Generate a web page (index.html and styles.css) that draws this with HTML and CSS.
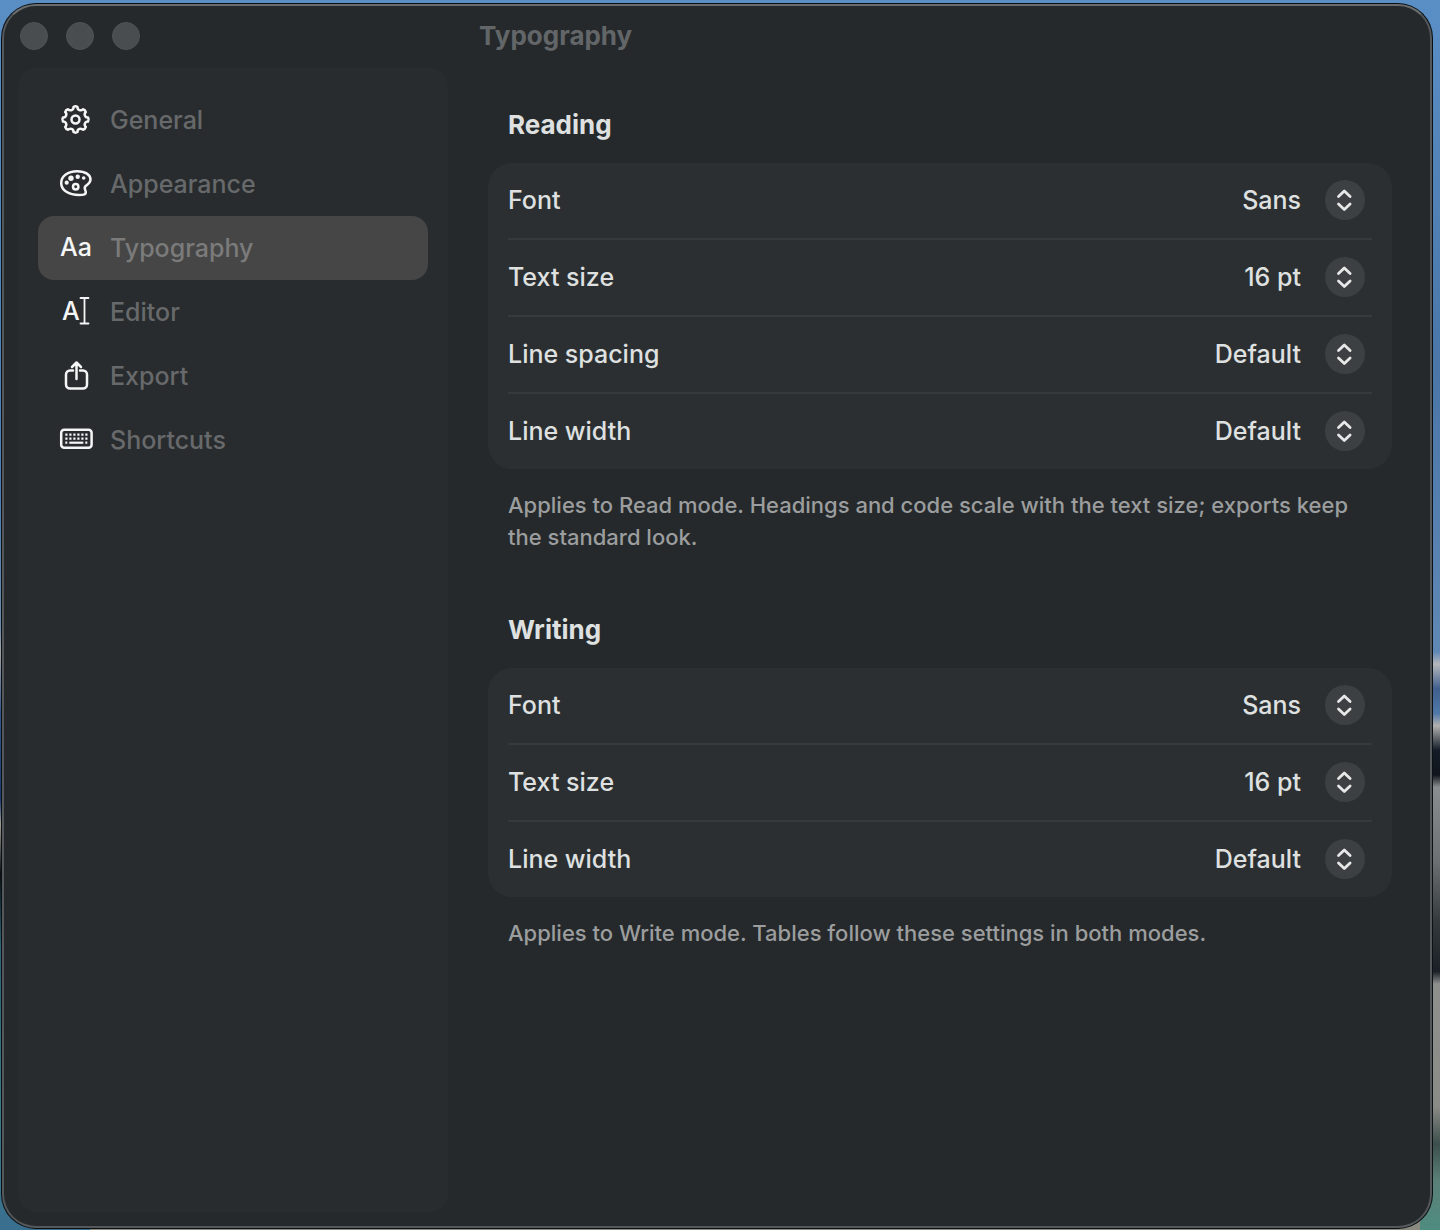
FILE: index.html
```html
<!DOCTYPE html>
<html lang="en">
<head>
  <meta charset="UTF-8">
  <title>Typography</title>
  <link rel="stylesheet" href="styles.css">
</head>
<body>

<!-- shared chevron icon for the pop-up buttons -->
<svg class="sprite" width="0" height="0" aria-hidden="true">
  <symbol id="chevrons" viewBox="-20 -20 40 40">
    <path d="M-6.5 -3.5L-.7 -9L5.1 -3.5M-6.5 4L-.7 9.5L5.1 4"/>
  </symbol>
</svg>

<div class="window">
  <header class="titlebar">
    <div class="lights">
      <button class="light" aria-label="Close"></button>
      <button class="light" aria-label="Minimize"></button>
      <button class="light" aria-label="Zoom"></button>
    </div>
    <h1>Typography</h1>
  </header>

  <nav class="sidebar">
    <a class="item" href="#general">
      <svg class="icon" viewBox="-16.5 -16.5 34 34">
        <path d="M2.03 -12.54C1.6 -9.6 5.5 -8 7.44 -10.32Q9.7 -9.7 10.32 -7.44C8 -5.5 9.6 -1.6 12.54 -2.03Q13.8 0 12.54 2.03C9.6 1.6 8 5.5 10.32 7.44Q9.7 9.7 7.44 10.32C5.5 8 1.6 9.6 2.03 12.54Q0 13.8 -2.03 12.54C-1.6 9.6 -5.5 8 -7.44 10.32Q-9.7 9.7 -10.32 7.44C-8 5.5 -9.6 1.6 -12.54 2.03Q-13.8 0 -12.54 -2.03C-9.6 -1.6 -8 -5.5 -10.32 -7.44Q-9.7 -9.7 -7.44 -10.32C-5.5 -8 -1.6 -9.6 -2.03 -12.54Q0 -13.8 2.03 -12.54Z"/>
        <circle r="4"/>
      </svg>
      <span>General</span>
    </a>
    <a class="item" href="#appearance">
      <svg class="icon" viewBox="-17 -17 34 34">
        <path d="M1 -12.8C9.5 -12.8 14.5 -9 14.5 -4.5C14.5 -1 11.5 .5 9.5 2.2C7.5 4.2 9.6 6 9.8 8C10 11 6.5 11 3 11C-7 11 -14.8 6.5 -14.8 -1C-14.8 -8 -8 -12.8 1 -12.8Z"/>
        <circle cx="-.3" cy="2.7" r="2.7"/>
        <g class="solid">
          <circle cx="-9.3" cy="-1.3" r="2.1"/>
          <circle cx="-5" cy="-5.8" r="2.7"/>
          <circle cx="1.7" cy="-7.3" r="2.2"/>
          <circle cx="7.7" cy="-6" r="1.8"/>
        </g>
      </svg>
      <span>Appearance</span>
    </a>
    <a class="item active" href="#typography">
      <svg class="icon" viewBox="-17 -17 34 34">
        <text class="glyph" x="0" y="8" text-anchor="middle">Aa</text>
      </svg>
      <span>Typography</span>
    </a>
    <a class="item" href="#editor">
      <svg class="icon" viewBox="-17 -17 34 34">
        <text class="glyph" x="-14" y="8">A</text>
        <path class="thin" d="M4.5 -14H12.5M4.5 11.5H12.5M8.5 -14V11.5"/>
      </svg>
      <span>Editor</span>
    </a>
    <a class="item" href="#export">
      <svg class="icon" viewBox="-17 -17 34 34">
        <path d="M-3 -5.5H-6A4 4 0 0 0 -10 -1.5V8.5A4 4 0 0 0 -6 12.5H7A4 4 0 0 0 11 8.5V-1.5A4 4 0 0 0 7 -5.5H4M.5 3V-13.2M-4 -9L.5 -13.5L5 -9"/>
      </svg>
      <span>Export</span>
    </a>
    <a class="item" href="#shortcuts">
      <svg class="icon" viewBox="-17 -17 34 34">
        <rect x="-14.8" y="-10.2" width="30.4" height="18" rx="3"/>
        <path class="keys" d="M-10.7 -5.3H12M-10.7 -1.3H12M-10.7 2.7H-8.7M9.3 2.7H11.3"/>
        <path class="keybar" d="M-6.7 2.7H7.3"/>
      </svg>
      <span>Shortcuts</span>
    </a>
  </nav>

  <main>
    <section>
      <h2>Reading</h2>
      <div class="card">
        <div class="row">
          <label for="read-font">Font</label>
          <div class="picker">
            <select id="read-font"><option>Sans</option><option>Serif</option><option>Mono</option></select>
            <svg><use href="#chevrons"/></svg>
          </div>
        </div>
        <div class="row">
          <label for="read-size">Text size</label>
          <div class="picker">
            <select id="read-size"><option>16 pt</option><option>18 pt</option></select>
            <svg><use href="#chevrons"/></svg>
          </div>
        </div>
        <div class="row">
          <label for="read-spacing">Line spacing</label>
          <div class="picker">
            <select id="read-spacing"><option>Default</option><option>Relaxed</option></select>
            <svg><use href="#chevrons"/></svg>
          </div>
        </div>
        <div class="row">
          <label for="read-width">Line width</label>
          <div class="picker">
            <select id="read-width"><option>Default</option><option>Wide</option></select>
            <svg><use href="#chevrons"/></svg>
          </div>
        </div>
      </div>
      <p class="note">Applies to Read mode. Headings and code scale with the text size; exports keep the standard look.</p>
    </section>

    <section>
      <h2>Writing</h2>
      <div class="card">
        <div class="row">
          <label for="write-font">Font</label>
          <div class="picker">
            <select id="write-font"><option>Sans</option><option>Serif</option><option>Mono</option></select>
            <svg><use href="#chevrons"/></svg>
          </div>
        </div>
        <div class="row">
          <label for="write-size">Text size</label>
          <div class="picker">
            <select id="write-size"><option>16 pt</option><option>18 pt</option></select>
            <svg><use href="#chevrons"/></svg>
          </div>
        </div>
        <div class="row">
          <label for="write-width">Line width</label>
          <div class="picker">
            <select id="write-width"><option>Default</option><option>Wide</option></select>
            <svg><use href="#chevrons"/></svg>
          </div>
        </div>
      </div>
      <p class="note">Applies to Write mode. Tables follow these settings in both modes.</p>
    </section>
  </main>
</div>

</body>
</html>
```
FILE: styles.css
```css
:root {
  --window-bg: #25292b;
  --sidebar-bg: #282c2e;
  --card-bg: #2b2f31;
  --line: #363a3c;
  --text: #dfe0e0;
  --muted: #67696b;
}

* {
  box-sizing: border-box;
}

/* desktop behind the window: sky on top, mountains and lake lower down */
body {
  margin: 0;
  min-height: 100vh;
  display: flex;
  padding: 4px 8px 2px 2px;
  font-family: Inter, "Liberation Sans", sans-serif;
  font-size: 25px;
  font-weight: 500;
  line-height: 32px;
  color: var(--text);
  background:
    linear-gradient(#5a8fc6 0, #4a76a8 30%, #6088b5 53%, #b5b8bb 54%, #405f8e 56%, #5079a8 58%, #b0b0ae 59%, #141c28 61%, #10151c 63%, #8b8e8f 64%, #6c7071 70%, #34393c 75%, #1a2026 79%, #8f908e 80%, #8a8a86 90%, #3c4f4c 93%, #5a8078 96%, #4f8c80 100%) right / 20px 100% no-repeat,
    linear-gradient(#5a8fc6 0, #4d7fb3 40%, #6c8caa 51%, #a5a5a3 53%, #34568c 58%, #1c3c70 65%, #a09c92 67%, #0c1014 71%, #2f6678 77%, #3a7a86 90%, #3a6f8f 100%) left / 90px 100% no-repeat,
    linear-gradient(#5a8fc6 50%, #8b8a80 50%);
}

.sprite {
  display: none;
}

.window {
  flex: 1;
  display: grid;
  grid-template-columns: 444px 1fr;
  grid-template-rows: 62px 1fr;
  border: 2px solid #54585a;
  border-top-color: #6a6d6e;
  border-radius: 34px;
  background: var(--window-bg);
  box-shadow: 0 0 0 1px #0b1015;
}

/* title bar */
.titlebar {
  grid-column: 1 / -1;
  display: grid;
  grid-template-columns: subgrid;
  align-items: center;
  padding-bottom: 2px;
}

.lights {
  display: flex;
  gap: 18px;
  padding-left: 16px;
}

.light {
  width: 28px;
  height: 28px;
  padding: 0;
  border: 1px solid #505355;
  border-radius: 50%;
  background: #4a4d4f;
}

h1 {
  margin: 0;
  padding-left: 31px;
  font-size: 26px;
  font-weight: 700;
  color: #636668;
}

/* sidebar */
.sidebar {
  margin: 0 0 14px 14px;
  padding: 20px;
  border-radius: 18px;
  background: var(--sidebar-bg);
}

.item {
  display: flex;
  align-items: center;
  gap: 17px;
  height: 64px;
  padding-left: 21px;
  border-radius: 16px;
  color: var(--muted);
  text-decoration: none;
}

.item.active {
  background: #464646;
  color: #7b7b7b;
}

.icon {
  width: 34px;
  height: 34px;
  fill: none;
  stroke: #f4f5f5;
  stroke-width: 2.5;
  stroke-linecap: round;
  stroke-linejoin: round;
}

.icon .solid {
  fill: #f4f5f5;
  stroke: none;
}

.icon .glyph {
  fill: #f4f5f5;
  stroke: none;
  font-size: 25px;
  font-weight: 500;
}

.icon .thin {
  stroke-width: 1.8;
}

.icon .keys,
.icon .keybar {
  stroke-width: 2.2;
  stroke-linecap: butt;
}

.icon .keys {
  stroke-dasharray: 2.2 1.8;
}

/* settings */
main {
  padding: 41px 38px 40px 40px;
}

section {
  margin-bottom: 61px;
}

h2 {
  margin: 0 20px 22px;
  font-size: 26px;
  font-weight: 700;
}

.card {
  padding: 0 20px;
  border-radius: 24px;
  background: var(--card-bg);
}

.row {
  display: flex;
  align-items: center;
  justify-content: space-between;
  height: 75px;
  padding: 0 7px 1px 0;
}

.row + .row {
  height: 77px;
  border-top: 2px solid var(--line);
}

/* value and round button share one grid cell so the whole area is clickable */
.picker {
  display: grid;
  align-items: center;
  justify-items: end;
}

.picker select,
.picker svg {
  grid-area: 1 / 1;
}

.picker select {
  appearance: none;
  height: 40px;
  padding: 0 64px 0 0;
  border: none;
  background: none;
  color: inherit;
  font: inherit;
  text-align-last: right;
}

.picker svg {
  width: 40px;
  height: 40px;
  border-radius: 50%;
  background: #3d4042;
  fill: none;
  stroke: #e6e7e7;
  stroke-width: 2.8;
  stroke-linecap: round;
  stroke-linejoin: round;
  pointer-events: none;
}

.note {
  margin: 20px 20px 0;
  font-size: 22px;
  color: #9b9d9e;
}
```
